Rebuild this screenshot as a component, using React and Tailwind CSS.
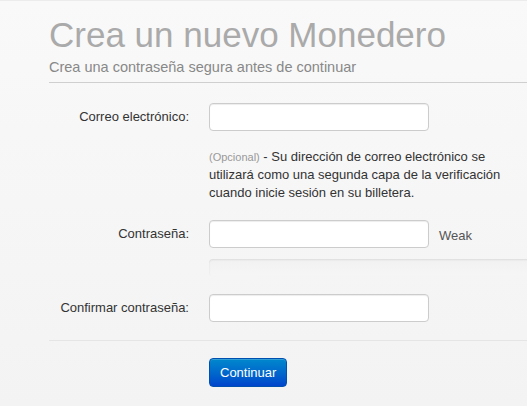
import React from "react"

/**
 * CreateWallet
 * Formulario para crear un nuevo monedero
 */
export default function App() {
  const labelClass = "w-[140px] shrink-0 text-right text-[13px] text-[#333]"
  const inputClass =
    "w-[220px] h-[28px] bg-white border border-[#ccc] rounded-[4px] shadow-[inset_0_1px_1px_rgba(0,0,0,0.075)] px-[6px] text-[13px] outline-none"

  return (
    <div
      className="w-[527px] h-[406px] overflow-hidden bg-gradient-to-b from-[#f9f9f9] to-[#f3f3f3] border-t border-[#ececec]"
      style={{ fontFamily: '"Liberation Sans", Arial, sans-serif' }}
    >
      <div className="pl-[49px]">
        {/* Header */}
        <div className="border-b border-[#cfcfcf] pb-[5px] pt-[13px]">
          <h1 className="text-[35px] leading-[42px] text-[#aaa] font-normal">
            Crea un nuevo Monedero
          </h1>
          <p className="text-[14.5px] leading-[20px] text-[#888] mt-[1px]">
            Crea una contraseña segura antes de continuar
          </p>
        </div>

        {/* Form */}
        <div className="pt-[20px]">
          <div className="flex items-center gap-[20px]">
            <label className={labelClass}>Correo electrónico:</label>
            <input className={inputClass} type="text" />
          </div>

          <p className="ml-[160px] mt-[17px] w-[300px] text-[13px] leading-[18px] text-[#333]">
            <span className="text-[11px] text-[#999]">(Opcional)</span> - Su dirección de
            correo electrónico se utilizará como una segunda capa de la verificación cuando
            inicie sesión en su billetera.
          </p>

          <div className="flex items-center gap-[20px] mt-[18px]">
            <label className={labelClass}>Contraseña:</label>
            <input className={inputClass} type="password" />
            <span className="ml-[-10px] mt-[4px] text-[13px] text-[#555]">Weak</span>
          </div>

          <div className="ml-[160px] mt-[11px] h-[17px] w-[400px] rounded-[4px] bg-gradient-to-b from-[#f1f1f1] to-[#f6f6f6] shadow-[inset_0_1px_2px_rgba(0,0,0,0.09)]" />

          <div className="flex items-center gap-[20px] mt-[18px]">
            <label className={labelClass}>Confirmar contraseña:</label>
            <input className={inputClass} type="password" />
          </div>

          <div className="mt-[18px] border-t border-[#e5e5e5] pt-[17px]">
            <div className="ml-[160px]">
              <button className="h-[29px] px-[10px] rounded-[4px] border border-[#0050b0] bg-gradient-to-b from-[#0088cc] to-[#0044cc] text-white text-[13px] leading-[20px] shadow-[inset_0_1px_0_rgba(255,255,255,0.2)]">
                Continuar
              </button>
            </div>
          </div>
        </div>
      </div>
    </div>
  )
}
